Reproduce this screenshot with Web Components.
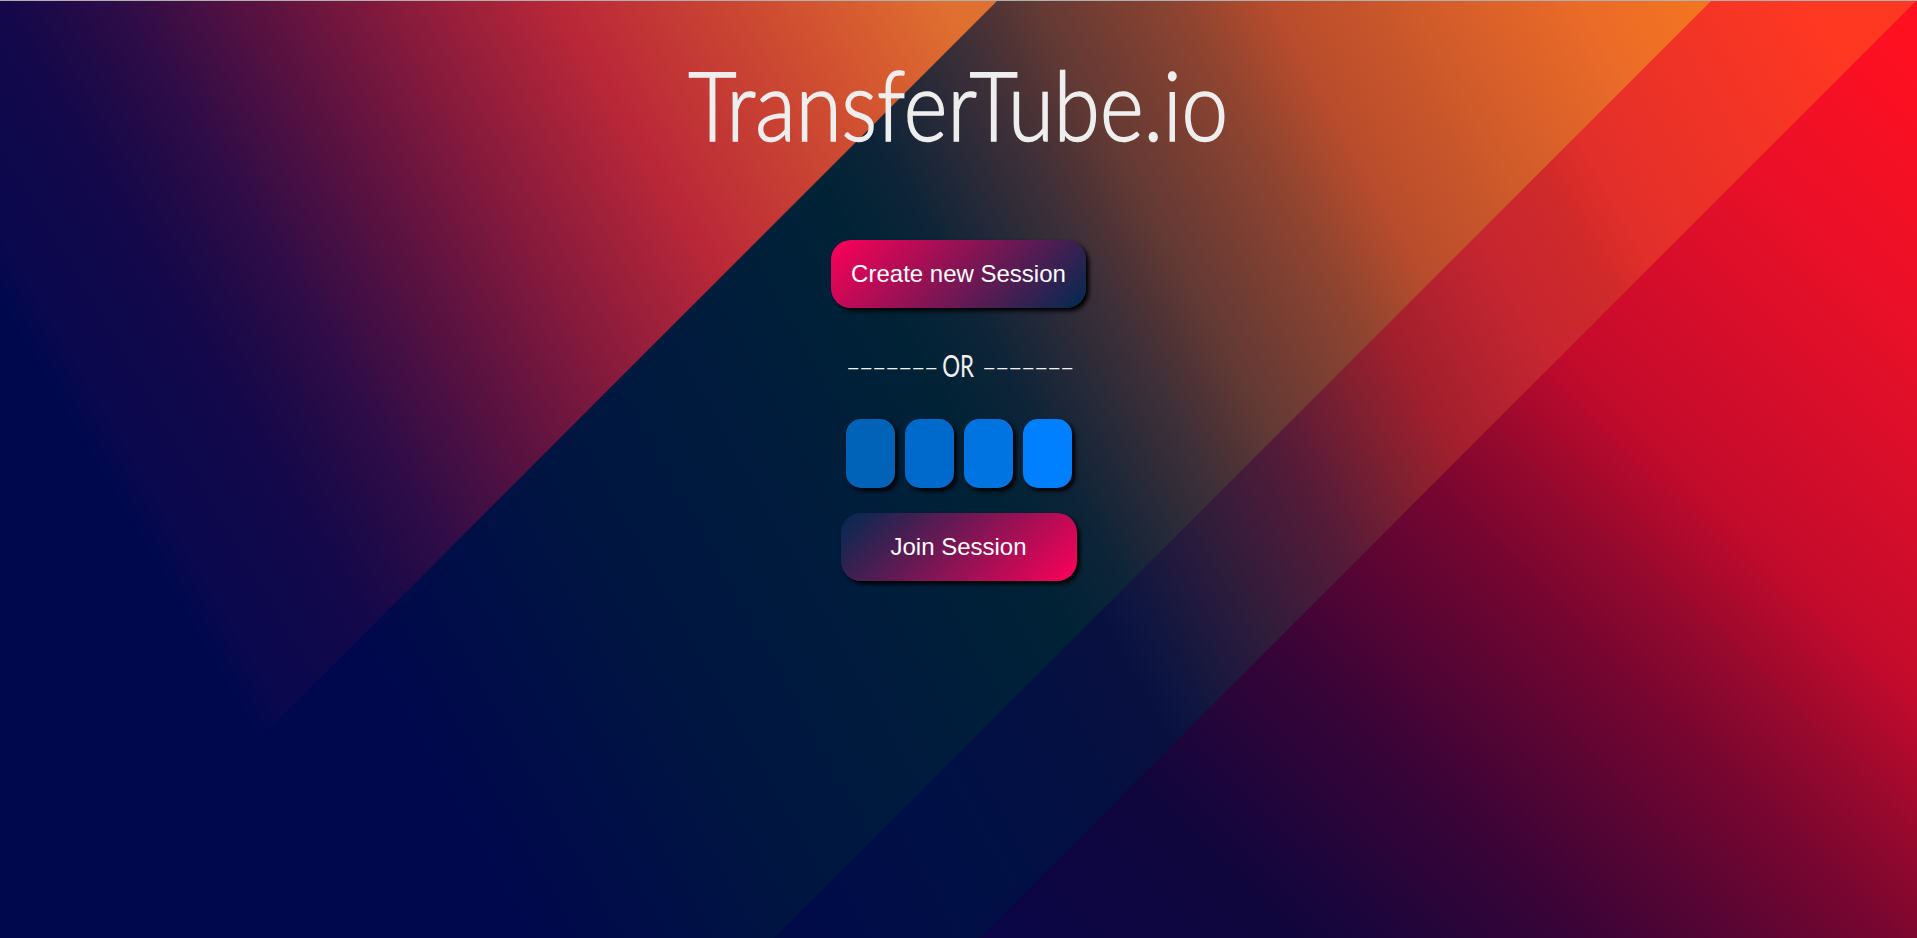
<!DOCTYPE html>
<html lang="en">
<head>
<meta charset="utf-8">
<title>TransferTube.io</title>
<style>
html, body { margin: 0; padding: 0; background: #00084d; }
</style>
</head>
<body>
<tt-page>
	<tt-title>TransferTube.io</tt-title>
	<tt-button>Create new Session</tt-button>
	<tt-divider>OR</tt-divider>
	<tt-pin></tt-pin>
	<tt-button reverse>Join Session</tt-button>
</tt-page>
<script>
// [offset, color] lists, the gradient vectors are in page pixels
const stops = list => list.map(([o, c]) => `<stop offset="${o}" stop-color="${c}"/>`).join('');

customElements.define('tt-page', class extends HTMLElement {
	connectedCallback() {
		this.attachShadow({mode: 'open'}).innerHTML = `
		<style>
		:host { display: grid; width: 100%; height: 938px; overflow: hidden; }
		svg, main { grid-area: 1 / 1; }
		svg { display: block; width: 100%; height: 938px; }
		main { display: flex; flex-direction: column; align-items: center; padding-top: 39px; }
		</style>
		<svg viewBox="0 0 1917 938" preserveAspectRatio="none" aria-hidden="true">
			<defs>
				<linearGradient id="a" gradientUnits="userSpaceOnUse" x1="-132" y1="78" x2="736" y2="-436">${stops([
					[0, '#00084d'], [.034, '#0a084e'], [.15, '#13084a'], [.2, '#200a48'], [.25, '#2d0c47'],
					[.37, '#5a1240'], [.48, '#851a3c'], [.63, '#ba2838'], [.82, '#d05030'], [.96, '#e07030']
				])}</linearGradient>
				<linearGradient id="b" gradientUnits="userSpaceOnUse" x1="0" y1="0" x2="1311" y2="-729">${stops([
					[0, '#00084d'], [.185, '#001640'], [.313, '#001c3c'], [.417, '#002235'], [.467, '#0e2438'],
					[.513, '#2a2a38'], [.55, '#3f3038'], [.573, '#4f3335'], [.603, '#643a34'], [.627, '#703c33'],
					[.687, '#8f4430'], [.74, '#b84c2c'], [.92, '#eb6b28'], [1, '#f4761f']
				])}</linearGradient>
				<linearGradient id="c" gradientUnits="userSpaceOnUse" x1="0" y1="0" x2="1392" y2="-784">${stops([
					[.15, '#000b48'], [.27, '#001045'], [.41, '#081040'], [.435, '#0f1640'], [.495, '#2f1c3b'],
					[.5625, '#551b38'], [.615, '#7f2030'], [.655, '#a11f2d'], [.735, '#c62630'], [.79, '#d02a2a'],
					[.82, '#e22f2a'], [.99, '#ff3822']
				])}</linearGradient>
				<linearGradient id="d" gradientUnits="userSpaceOnUse" x1="0" y1="0" x2="980" y2="-994">${stops([
					[0, '#0a0648'], [.177, '#10063d'], [.32, '#3a0437'], [.47, '#760630'], [.54, '#9a092d'],
					[.61, '#c40b2c'], [.79, '#e81028'], [.94, '#ff1020']
				])}</linearGradient>
			</defs>
			<rect width="1917" height="938" fill="url(#b)"/>
			<polygon points="0,0 998,0 60,938 0,938" fill="url(#a)"/>
			<polygon points="1712,0 1917,0 1917,938 774,938" fill="url(#c)"/>
			<polygon points="1917,0 1917,938 979,938" fill="url(#d)"/>
			<rect width="1917" height="1" fill="#b0b0b0"/>
		</svg>
		<main><slot></slot></main>`;
	}
});

customElements.define('tt-title', class extends HTMLElement {
	connectedCallback() {
		this.attachShadow({mode: 'open'}).innerHTML = `
		<style>
		:host { display: block; margin-bottom: 71px; }
		h1 {
			margin: 0; font: 300 96px/130px Lato, "Open Sans", sans-serif; color: #eee; white-space: nowrap;
			-webkit-text-stroke: 1.6px #eee; transform: scaleX(.87);
		}
		</style>
		<h1><slot></slot></h1>`;
	}
});

customElements.define('tt-button', class extends HTMLElement {
	connectedCallback() {
		this.attachShadow({mode: 'open'}).innerHTML = `
		<style>
		:host { display: block; }
		button {
			display: block; box-sizing: border-box; height: 68px; padding: 0 19.75px; border: 0; border-radius: 20px;
			font: 24px "Liberation Sans", Arial, sans-serif; color: #fff; cursor: pointer;
			background: linear-gradient(135deg, #ff0058, #002a50);
			box-shadow: 3px 3px 4px #000;
		}
		:host([reverse]) button { width: 236px; background: linear-gradient(135deg, #002a50, #ff0058); }
		</style>
		<button type="button"><slot></slot></button>`;
	}
});

customElements.define('tt-divider', class extends HTMLElement {
	connectedCallback() {
		this.attachShadow({mode: 'open'}).innerHTML = `
		<style>
		:host { display: flex; align-items: center; margin: 37px 0 34px; color: #f0f0f0; font: 400 31px/40px Lato, sans-serif; }
		.dash { display: block; margin: 0 12px; font-size: 32px; font-weight: 300; letter-spacing: -2.2px; transform: translateY(1px) scaleX(1.35); }
		.mid { display: block; transform: scaleX(.72); }
		</style>
		<span class="dash">------- </span><span class="mid"><slot></slot></span><span class="dash"> -------</span>`;
	}
});

customElements.define('tt-pin', class extends HTMLElement {
	connectedCallback() {
		const colors = ['#0063b8', '#0069cc', '#0074e0', '#0080ff'];
		this.attachShadow({mode: 'open'}).innerHTML = `
		<style>
		:host { display: flex; gap: 10px; margin-bottom: 25px; }
		input {
			box-sizing: border-box; width: 49px; height: 69px; padding: 0; border: 0; border-radius: 15px;
			color: #fff; text-align: center; outline: none; box-shadow: 3px 3px 4px #000;
		}
		</style>
		${colors.map(c => `<input maxlength="1" style="background:${c}">`).join('')}`;
	}
});
</script>
</body>
</html>
